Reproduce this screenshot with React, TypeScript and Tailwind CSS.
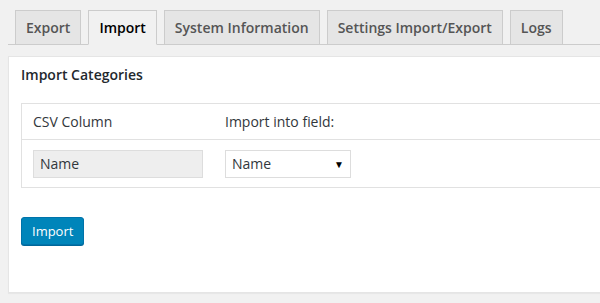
import { useState } from 'react';

const TABS = ['Export', 'Import', 'System Information', 'Settings Import/Export', 'Logs'];

export default function App() {
  const [active, setActive] = useState('Import');
  const [field, setField] = useState('Name');

  return (
    <div className="min-h-[303px] bg-[#f1f1f1] pl-2 pt-[10px] font-['Open_Sans',sans-serif] text-[14px] overflow-hidden">
      {/* Tabs */}
      <div className="flex gap-[7px] pl-[7px] border-b border-[#ccc]">
        {TABS.map((t) => (
          <button
            key={t}
            onClick={() => setActive(t)}
            className={
              'h-[35px] -mb-px px-[10px] border border-[#ccc] leading-[24px] font-semibold ' +
              (active === t
                ? 'bg-[#f1f1f1] border-b-[#f1f1f1] text-black'
                : 'bg-[#e5e5e5] border-b-[#ccc] text-[#555]')
            }
          >
            {t}
          </button>
        ))}
      </div>

      {/* Panel */}
      <div className="mt-[11px] -mr-4 h-[237px] bg-white border border-[#e5e5e5] shadow-[0_1px_1px_rgba(0,0,0,0.04)] pl-3 pt-[8px]">
        <h3 className="text-[14px] leading-[20px] font-semibold text-[#23282d]">Import Categories</h3>

        <div className="mt-[18px] border border-[#e1e1e1] text-[#32373c]">
          <div className="flex h-[36px] items-center border-b border-[#e1e1e1]">
            <div className="w-[192px] pl-[11px]">CSV Column</div>
            <div className="pl-[11px]">Import into field:</div>
          </div>
          <div className="flex h-[47px] items-center">
            <div className="w-[192px] pl-[11px]">
              <div className="w-[170px] h-[28px] bg-[#eee] border border-[#ddd] pl-[6px] leading-[26px] text-[#32373c]">
                Name
              </div>
            </div>
            <div className="pl-[11px]">
              <div className="relative w-[126px] h-[28px]">
                <select
                  value={field}
                  onChange={(e) => setField(e.target.value)}
                  className="appearance-none w-full h-full bg-white border border-[#ddd] pl-[6px] text-[14px] text-[#32373c] outline-none"
                >
                  <option>Name</option>
                  <option>Slug</option>
                  <option>Description</option>
                </select>
                <span className="pointer-events-none absolute right-[7px] top-[7px] text-[10px] leading-[14px] text-black">▼</span>
              </div>
            </div>
          </div>
        </div>

        <button className="mt-[29px] h-[28px] px-[10px] pb-px rounded-[3px] border border-[#0073aa] bg-[#0085ba] text-white text-[13px] leading-[26px] shadow-[0_1px_0_#006799]">
          Import
        </button>
      </div>
    </div>
  );
}
